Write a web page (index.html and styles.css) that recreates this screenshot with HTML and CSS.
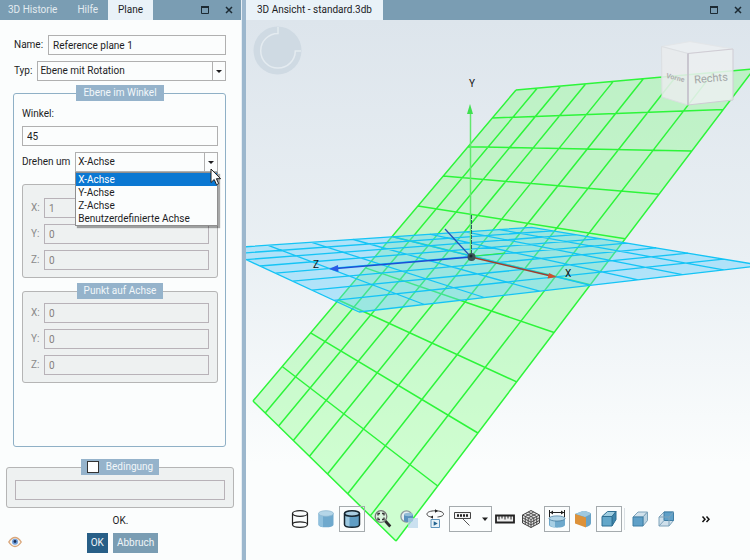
FILE: index.html
```html
<!DOCTYPE html>
<html lang="de">
<head>
<meta charset="utf-8">
<title>3D Ansicht</title>
<link rel="stylesheet" href="styles.css">
</head>
<body>
<div class="app">
  <aside class="panel">
    <header class="bar">
      <nav class="tabs">
        <button class="tab" type="button">3D Historie</button>
        <button class="tab" type="button">Hilfe</button>
        <button class="tab tab-active" type="button">Plane</button>
      </nav>
      <div class="wincontrols">
        <button class="winbtn" type="button" aria-label="Maximieren"><svg width="10" height="10" viewBox="0 0 10 10"><path d="M1.5 2.5h7v6h-7z" fill="none" stroke="#1c2a33"/><path d="M1 2h8" stroke="#1c2a33" stroke-width="2"/></svg></button>
        <button class="winbtn" type="button" aria-label="Schließen"><svg width="10" height="10" viewBox="0 0 10 10"><path d="M2 2l6 6M8 2l-6 6" stroke="#1c2a33" stroke-width="1.5"/></svg></button>
      </div>
    </header>
    <form class="form">
      <div class="top-rows">
        <div class="row">
          <label for="name">Name:</label>
          <input class="field" id="name" type="text" value="Reference plane 1">
        </div>
        <div class="row">
          <label for="typ">Typ:</label>
          <div class="combo"><select id="typ"><option>Ebene mit Rotation</option></select></div>
        </div>
      </div>

      <fieldset class="group group-main">
        <legend>Ebene im Winkel</legend>
        <label class="line" for="winkel">Winkel:</label>
        <input class="field" id="winkel" type="text" value="45">
        <div class="row axis-row">
          <label for="achse">Drehen um</label>
          <div class="combo">
            <select id="achse"><option>X-Achse</option></select>
            <ul class="menu" role="listbox" aria-label="Drehen um">
              <li class="selected" role="option" aria-selected="true">X-Achse</li>
              <li role="option">Y-Achse</li>
              <li role="option">Z-Achse</li>
              <li role="option">Benutzerdefinierte Achse</li>
            </ul>
            <svg class="cursor" width="12" height="19" viewBox="0 0 12 19"><path d="M1 1v13.500l3.200-3 2.300 5.200 2.200-1-2.300-5h4.200z" fill="#fff" stroke="#222"/></svg>
          </div>
        </div>
        <fieldset class="group group-off group-plain" disabled>
          <div class="row"><label for="ax">X:</label><input class="field" id="ax" type="text" value="1"></div>
          <div class="row"><label for="ay">Y:</label><input class="field" id="ay" type="text" value="0"></div>
          <div class="row"><label for="az">Z:</label><input class="field" id="az" type="text" value="0"></div>
        </fieldset>
        <fieldset class="group group-off" disabled>
          <legend>Punkt auf Achse</legend>
          <div class="row"><label for="px">X:</label><input class="field" id="px" type="text" value="0"></div>
          <div class="row"><label for="py">Y:</label><input class="field" id="py" type="text" value="0"></div>
          <div class="row"><label for="pz">Z:</label><input class="field" id="pz" type="text" value="0"></div>
        </fieldset>
      </fieldset>

      <fieldset class="group group-off group-condition">
        <legend><label class="check"><input type="checkbox">Bedingung</label></legend>
        <input class="field" type="text" aria-label="Bedingung" disabled>
      </fieldset>

      <p class="status">OK.</p>
      <footer class="actions">
        <button class="eye" type="button" aria-label="Vorschau"><svg width="14" height="12" viewBox="0 0 14 12"><path d="M.8 6C3 2.500 5 1.500 7 1.500S11 2.500 13.200 6C11 9.500 9 10.500 7 10.500S3 9.500.8 6z" fill="#f4f4f2" stroke="#d9a67a" stroke-width="1.400"/><circle cx="7" cy="5.700" r="3" fill="#6f9fdc"/><circle cx="7" cy="5.500" r="1.400" fill="#1c2f55"/></svg></button>
        <button class="btn btn-primary" type="button">OK</button>
        <button class="btn" type="button">Abbruch</button>
      </footer>
    </form>
  </aside>

  <div class="splitter"></div>

  <main class="view">
    <header class="bar">
      <nav class="tabs"><button class="tab tab-active tab-view" type="button">3D Ansicht - standard.3db</button></nav>
      <div class="wincontrols">
        <button class="winbtn" type="button" aria-label="Maximieren"><svg width="10" height="10" viewBox="0 0 10 10"><path d="M1.500 2.500h7v6h-7z" fill="none" stroke="#1c2a33"/><path d="M1 2h8" stroke="#1c2a33" stroke-width="2"/></svg></button>
        <button class="winbtn" type="button" aria-label="Schließen"><svg width="10" height="10" viewBox="0 0 10 10"><path d="M2 2l6 6M8 2l-6 6" stroke="#1c2a33" stroke-width="1.500"/></svg></button>
      </div>
    </header>
    <div class="canvas">
      <svg class="scene" viewBox="246 20 504 540" preserveAspectRatio="xMinYMin slice">
        <circle cx="277.500" cy="50.500" r="24" fill="#cfdae3"/>
        <path d="M278 27v6.500A17.300 17.300 0 1 0 295.300 51H301" fill="none" stroke="#e4ebf0" stroke-width="1.500"/>

        <g id="tilted" class="plane-tilted"></g>
        <g id="ground" class="plane-ground"></g>

        <path d="M470.500 112V257" stroke="#62e86e" stroke-width="1.500"/>
        <path d="M470 104l3 10h-6z" fill="#3fe04f"/>
        <path d="M475 256l30-3" stroke="#2fee3a"/>
        <path d="M471.500 215v38" stroke="#2c5a68" stroke-dasharray="4 1"/>
        <path d="M445 229l26 28" stroke="#2450b8" stroke-width="1.300"/>
        <path d="M471 257L336 268.500" stroke="#1c4fd6" stroke-width="1.500"/>
        <path d="M329 269l9-4 .5 7z" fill="#2a5be6"/>
        <path d="M471 257l80 19" stroke="#a0402c" stroke-width="1.500"/>
        <path d="M557 277l-8-4-1.500 5.500z" fill="#cf4f2e"/>
        <circle cx="471.500" cy="257" r="4" fill="#3c5458"/>
        <circle cx="471" cy="256" r="1.500" fill="#1c2c30"/>
        <text class="axis" x="469" y="87">Y</text>
        <text class="axis" x="565" y="277">X</text>
        <text class="axis" x="313" y="268">Z</text>

        <g stroke="#cfccd4">
          <path d="M661.500 46.500L690 41.500 733 49 688 53.500z" fill="#eceff1" fill-opacity=".85" stroke="#e3e6e9"/>
          <path d="M661.500 46.500L688 53.500V105L662 97z" fill="#e9eced" fill-opacity=".88" stroke="#dcdfe2"/>
          <path d="M688 53.500L733 49V100L688 105z" fill="#eceff0" fill-opacity=".88"/>
          <path d="M688 53.500V105" stroke="#c3bfca" stroke-width="1.500"/>
        </g>
        <text class="cube-text" transform="rotate(-5 711 77)" x="694" y="82">Rechts</text>
        <text class="cube-side" transform="rotate(14 675 78)" x="666" y="80">Vorne</text>
      </svg>

      <div class="toolbar" role="toolbar">
        <button class="tool" type="button" aria-label="Drahtmodell"><svg viewBox="0 0 20 20"><g fill="none" stroke="#222" stroke-width="1.200"><ellipse cx="10" cy="4.500" rx="7.500" ry="2.800"/><path d="M2.500 4.500v11c0 3.800 15 3.800 15 0v-11"/><path d="M2.500 15.500c0-3.400 15-3.400 15 0"/></g></svg></button>
        <button class="tool" type="button" aria-label="Schattiert"><svg viewBox="0 0 20 20"><path d="M2.500 4.500v11c0 3.800 15 3.800 15 0v-11z" fill="#6fa9cd"/><path d="M2.500 4.500v11c0 1.500 2 2.300 4.500 2.700V5z" fill="#8fc0dd"/><ellipse cx="10" cy="4.500" rx="7.500" ry="2.800" fill="#b5d6e8" stroke="#8fb9d2" stroke-width=".8"/></svg></button>
        <button class="tool tool-on" type="button" aria-label="Schattiert mit Kanten"><svg viewBox="0 0 20 20"><path d="M2.500 4.500v11c0 3.800 15 3.800 15 0v-11z" fill="#5f9dc4"/><path d="M3 5v10.500c0 1.500 2 2.300 4.500 2.700V5z" fill="#9cc8e0"/><ellipse cx="10" cy="4.500" rx="7.500" ry="2.800" fill="#a9cde2"/><path d="M2.500 4.500v11c0 3.800 15 3.800 15 0v-11" fill="none" stroke="#16252f" stroke-width="1.500"/><ellipse cx="10" cy="4.500" rx="7.500" ry="2.800" fill="none" stroke="#16252f" stroke-width="1.500"/></svg></button>
        <span class="space"></span>
        <button class="tool" type="button" aria-label="Alles zeigen"><svg viewBox="0 0 20 20"><circle cx="8" cy="7.500" r="5.800" fill="#e4ece8" fill-opacity=".6" stroke="#777" stroke-width="1.300"/><path d="M5 6.500V4.500h2M9 4.500h2v2M11 8.500v2H9M7 10.500H5v-2" fill="none" stroke="#333" stroke-width="1.300"/><path d="M12.300 12l5 5.500" stroke="#2c2c2c" stroke-width="2.800"/></svg></button>
        <button class="tool" type="button" aria-label="Auswahl zoomen"><svg viewBox="0 0 20 20"><circle cx="7.500" cy="7.500" r="5.600" fill="#e6eef0" stroke="#8d999d" stroke-width="1.300"/><path d="M5 5.500v6c0 2 9 2 9 0v-6z" fill="#5a92bd"/><ellipse cx="9.500" cy="5.500" rx="4.500" ry="1.700" fill="#93bcd6"/><path d="M9 9h10v10H9z" fill="#b7d4ea" fill-opacity=".7"/></svg></button>
        <button class="tool" type="button" aria-label="Drehung abspielen"><svg viewBox="0 0 20 20"><path d="M12.500 8c3.500-.4 6-1.300 6-2.900C18.500 3 15 1.800 10.300 1.800S2 3 2 5.100 5 8 8 8.200" fill="none" stroke="#444"/><path d="M10 .2l3 1.700-3 1.800zM8 6.500v3.300L5.500 8z" fill="#222"/><path d="M6 10.500h8.500v8H6z" fill="#e8f2f8" stroke="#5c93bb"/><path d="M8.700 12.200l4 2.300-4 2.300z" fill="#23638f"/></svg></button>
        <button class="tool tool-on tool-split" type="button" aria-label="Beschriftung"><svg viewBox="0 0 20 20"><path d="M1.500 3.500h16v6h-16z" fill="#f3f3f3" stroke="#444"/><path d="M4 6.500h11" stroke="#222" stroke-width="2.500" stroke-dasharray="2 1"/><path d="M10 10l6.500 6.500" stroke="#555"/></svg><svg class="caret" viewBox="0 0 8 8"><path d="M1 2.500h6L4 6z" fill="#222"/></svg></button>
        <button class="tool" type="button" aria-label="Messen"><svg viewBox="0 0 20 20"><path d="M1 6.500h18v7H1z" fill="#eee" stroke="#222" stroke-width="1.800"/><path d="M4 7v3.500M7 7v2.500M10 7v3.500M13 7v2.500M16 7v3.500" stroke="#222"/></svg></button>
        <button class="tool" type="button" aria-label="Netz"><svg viewBox="0 0 20 20"><path d="M10 1.500l8.500 4.500v8L10 18.500 1.500 14V6z" fill="#e2e2e2" stroke="#444"/><path d="M1.500 6l8.500 4.500L18.500 6M10 10.500v8M1.500 8.700l8.500 4.500 8.500-4.500M1.500 11.400l8.500 4.500 8.500-4.500M4.300 4.500l8.500 4.500v8M7.200 3l8.500 4.500v8M15.700 4.500L7.200 9v8M12.800 3L4.300 7.500v8" fill="none" stroke="#444" stroke-width=".9"/></svg></button>
        <button class="tool tool-on" type="button" aria-label="Durchmesser"><svg viewBox="0 0 20 20"><path d="M2 9.500v6.300c0 3.800 16 3.800 16 0V9.500z" fill="#6ea9cc"/><path d="M3 10v6c0 1 2 2 5 2.300V10z" fill="#a7cfe4"/><ellipse cx="10" cy="9.500" rx="8" ry="2.600" fill="#b3d5e7" stroke="#497e9f" stroke-width=".8"/><path d="M2.500 1v7M17.500 1v7M3 3.500h14" stroke="#222"/><path d="M3 3.500l3-2v4zM17 3.500l-3-2v4z" fill="#222"/></svg></button>
        <button class="tool" type="button" aria-label="Schnitt"><svg viewBox="0 0 20 20"><path d="M2 5l8-3c4 0 8 2 8 3v9c0 2-3 4-6 4z" fill="#69a3c6"/><path d="M2 5l8-3c4 0 8 2 7 3.500L12 8z" fill="#9fc9df"/><path d="M2 5l11 3.500V18.500L2 14.500z" fill="#dd923a"/></svg></button>
        <button class="tool tool-on" type="button" aria-label="Perspektive"><svg viewBox="0 0 20 20"><path d="M3 7.500L8.500 2.500H17L13 7.500z" fill="#9fcde0" stroke="#2f6f92"/><path d="M13 7.500l4-5v8l-4 6.500z" fill="#3f86ac" stroke="#2f6f92"/><path d="M3 7.500h10V17H3z" fill="#63a7c9" stroke="#2f6f92"/></svg></button>
        <span class="sep"></span>
        <button class="tool" type="button" aria-label="Vorderansicht"><svg viewBox="0 0 20 20"><path d="M3 8l5-5h9.500L13 8z" fill="#d2e2ec" stroke="#7fa3ba"/><path d="M13 8l4.500-5v8.500L13 17z" fill="#bcd4e2" stroke="#7fa3ba"/><path d="M3 8h10v9H3z" fill="#5fa0c8" stroke="#3f7ea5"/></svg></button>
        <button class="tool" type="button" aria-label="Rückansicht"><svg viewBox="0 0 20 20"><path d="M3 8l5-5h9.500v8.500L13 17H3z" fill="#cfe0eb" stroke="#7fa3ba"/><path d="M8 3h9.500v8.500H8z" fill="#5fa0c8" stroke="#3f7ea5"/><path d="M3 17l5-5.500M13 8v9M3 8h10l4.500-5" fill="none" stroke="#7fa3ba"/></svg></button>
        <span class="space-wide"></span>
        <button class="tool" type="button" aria-label="Mehr"><svg viewBox="0 0 20 20"><path d="M6.500 7.500l2.500 2.700-2.500 2.800M10.500 7.500l2.500 2.700-2.500 2.800" fill="none" stroke="#111" stroke-width="1.500"/></svg></button>
      </div>
    </div>
  </main>
</div>
<script src="scene.js"></script>
</body>
</html>
```
FILE: styles.css
```css
* { box-sizing: border-box; }

body {
  margin: 0;
  font: 10px/16px Roboto, "Open Sans", sans-serif;
  color: #1d1d1f;
}

button, input, select { font: inherit; color: inherit; margin: 0; }
button { border: 0; padding: 0; background: none; }

.app { display: flex; height: 100vh; background: #fbfdfd; }

.panel { display: flex; flex-direction: column; flex: 0 0 241px; }

.splitter {
  flex: 0 0 5px;
  background: #9cb7cd;
  border-left: 1px solid #e6eef4;
}

.view { display: flex; flex-direction: column; flex: 1; min-width: 0; }

.bar {
  display: flex;
  justify-content: space-between;
  flex: 0 0 20px;
  background: #7a9db3;
}

.tabs { display: flex; }
.tab { padding: 0 10px; color: #e3ebf0; }
.tab:first-child { padding-left: 8px; }
.tab-active { background: #e9f2f8; color: #1d1d1f; }
.tab.tab-view { padding: 0 11px; }

.wincontrols { display: flex; align-items: center; gap: 14px; padding-right: 7px; }
.winbtn { width: 10px; height: 10px; }
.winbtn svg { display: block; }

.form { display: flex; flex-direction: column; flex: 1; }

.top-rows { display: flex; flex-direction: column; gap: 6px; padding: 15px 15px 4px 14px; }

.row { display: flex; align-items: center; gap: 5px; }

.field {
  display: block;
  width: 100%;
  min-width: 0;
  height: 20px;
  padding: 0 4px;
  border: 1px solid #b0b0b0;
  background: #fbfdfd;
}

.combo { position: relative; flex: 1; height: 20px; }
.combo select {
  display: block;
  width: 100%;
  height: 20px;
  padding: 0 2px;
  border: 1px solid #b0b0b0;
  border-radius: 0;
  background: #fbfdfd;
  appearance: none;
}
.combo::before {
  content: "";
  position: absolute;
  top: 0;
  right: 13px;
  height: 20px;
  border-left: 1px solid #b0b0b0;
}
.combo::after {
  content: "";
  position: absolute;
  top: 9px;
  right: 4px;
  border: 3px solid transparent;
  border-top: 3px solid #1d1d1f;
  border-bottom: 0;
}

.menu {
  position: absolute;
  z-index: 1;
  top: 20px;
  left: 0;
  right: 0;
  margin: 0;
  padding: 0;
  list-style: none;
  background: #fbfdfd;
  border: 1px solid #8f8f8f;
  box-shadow: 2px 2px 1px #0005;
}
.menu li { padding: 0 2px; line-height: 13px; }
.menu .selected { background: #0b78d2; color: #fff; }

.cursor { position: absolute; z-index: 2; top: 16px; right: -4px; }

.group {
  min-width: 0;
  margin: 0;
  padding: 0 8px;
  border: 1px solid #8fb0c6;
  border-radius: 3px;
}
.group > legend {
  height: 16px;
  margin: 0 auto;
  padding: 0 7px;
  background: #95b3cb;
  color: #f2f7fa;
}
.group-main { flex: 1; margin: 0 15px 12px 13px; padding: 5px 7px 0 8px; }
.group-main .line { display: block; margin-bottom: 4px; }
.axis-row { margin: 6px 0 12px; }

.group-off { padding: 4px 8px 7px; border-color: #b5b5b5; background: #eef1f1; }
.group-off .row + .row { margin-top: 6px; }
.group-off .row label { width: 8px; color: #8a8a8a; }
.group-off .field { background: #eef1f1; border-color: #b8b2b8; color: #85807e; }
.group-plain { margin-bottom: 5px; padding-top: 13px; }

.group-condition { margin: 0 7px 0 6px; padding-top: 5px; }

.check { display: flex; align-items: center; gap: 7px; height: 16px; }
.check input {
  width: 12px;
  height: 12px;
  appearance: none;
  border: 1px solid #333;
  background: #fff;
}
.group-condition > legend { padding: 0 6px; }

.status { margin: 5px 0 4px; text-align: center; }

.actions { display: flex; position: relative; justify-content: center; gap: 5px; padding: 0 0 7px 4px; }
.btn { height: 20px; padding: 0 4px; background: #7a9db3; color: #f0f5f8; }
.btn-primary { background: #285f87; }
.eye { position: absolute; left: 8px; top: 3px; width: 14px; height: 12px; }
.eye svg { display: block; }

.canvas {
  position: relative;
  flex: 1;
  min-height: 0;
  background: linear-gradient(#dde5ec, #eaf0f4 45%, #fbfdfd 82%);
}
.scene { display: block; width: 100%; height: 100%; }

.plane-tilted polygon { fill: #8cff8c; fill-opacity: .4; }
.plane-tilted path { stroke: #2df53a; stroke-width: 1.5; fill: none; }
.plane-ground polygon { fill: #5fd0ff; fill-opacity: .42; }
.plane-ground path { stroke: #14c4f5; stroke-width: 1.3; fill: none; }

.axis { font-size: 10px; fill: #111; }
.cube-text { font-size: 11px; fill: #a3a6a6; }
.cube-side { font-size: 7px; font-weight: bold; fill: #b0b0b0; }

.toolbar {
  position: absolute;
  left: 41px;
  bottom: 28px;
  display: flex;
}
.tool {
  display: flex;
  align-items: center;
  justify-content: center;
  width: 26px;
  height: 26px;
  border: 1px solid transparent;
}
.tool svg { width: 20px; height: 20px; }
.tool-on { border-color: #a5abae; }
.tool-split { width: 43px; gap: 8px; margin-left: 1px; }
.tool .caret { width: 8px; height: 8px; }
.space { width: 5px; }
.sep { width: 1px; height: 22px; margin: 2px; background: #d9dfe3; }
.space-wide { width: 14px; }
```
FILE: scene.js
```js
// Draws a grid on a quadrilateral seen in perspective.
// Corners run clockwise: a-b is the u direction, a-d the v direction.
function drawPlane(id, [a, b, c, d], cols, rows) {
  const sx = a[0] - b[0] + c[0] - d[0];
  const sy = a[1] - b[1] + c[1] - d[1];
  const dx1 = b[0] - c[0], dx2 = d[0] - c[0];
  const dy1 = b[1] - c[1], dy2 = d[1] - c[1];
  const det = dx1 * dy2 - dx2 * dy1;
  const g = (sx * dy2 - dx2 * sy) / det;
  const h = (dx1 * sy - sx * dy1) / det;

  const project = (u, v) => {
    const w = g * u + h * v + 1;
    const x = (b[0] - a[0] + g * b[0]) * u + (d[0] - a[0] + h * d[0]) * v + a[0];
    const y = (b[1] - a[1] + g * b[1]) * u + (d[1] - a[1] + h * d[1]) * v + a[1];
    return (x / w).toFixed(1) + " " + (y / w).toFixed(1);
  };

  let lines = "";
  for (let i = 0; i <= cols; i++) lines += `M${project(i / cols, 0)}L${project(i / cols, 1)}`;
  for (let j = 0; j <= rows; j++) lines += `M${project(0, j / rows)}L${project(1, j / rows)}`;

  document.getElementById(id).innerHTML =
    `<polygon points="${[a, b, c, d].join(" ")}"/><path d="${lines}"/>`;
}

drawPlane("tilted", [[516, 90], [754, 69], [396, 541], [253, 401]], 8, 10);
drawPlane("ground", [[222, 248.4], [531.7, 227.3], [762, 265.5], [359, 312]], 8, 8);
```
